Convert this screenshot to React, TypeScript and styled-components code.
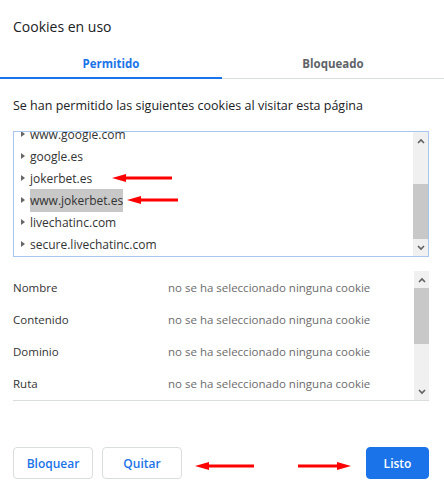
import React from 'react'
import styled, { createGlobalStyle } from 'styled-components'

const GlobalStyle = createGlobalStyle`
  body {
    margin: 0;
    background: #fff;
    font-family: "Open Sans", "Noto Sans", sans-serif;
    color: #202124;
  }
`

const BLUE = '#1a73e8'

type Cookie = { id: string, host: string, selected?: boolean }

const COOKIES: Cookie[] = [
  { id: 'c1', host: 'www.google.com' },
  { id: 'c2', host: 'google.es' },
  { id: 'c3', host: 'jokerbet.es' },
  { id: 'c4', host: 'www.jokerbet.es', selected: true },
  { id: 'c5', host: 'livechatinc.com' },
  { id: 'c6', host: 'secure.livechatinc.com' },
]

const FIELDS = ['Nombre', 'Contenido', 'Dominio', 'Ruta']

const Dialog = styled.div`
  position: relative;
  width: 444px;
  height: 495px;
  overflow: hidden;
`

const Title = styled.div`
  padding: 17px 13px 0;
  font-size: 14px;
  line-height: 20px;
  color: #202124;
`

const Tabs = styled.div`
  display: flex;
  margin-top: 12px;
  box-shadow: inset 0 -1px 0 #dadce0;
`

const Tab = styled.div<{ $active?: boolean }>`
  flex: 1;
  height: 28px;
  display: flex;
  align-items: center;
  justify-content: center;
  font-size: 11.5px;
  font-weight: 700;
  color: ${p => p.$active ? BLUE : '#5f6368'};
  border-bottom: 2px solid ${p => p.$active ? BLUE : 'transparent'};
`

const Description = styled.div`
  padding: 18px 13px 0;
  font-size: 12.5px;
  line-height: 18px;
  color: #202124;
`

const ListBox = styled.div`
  display: flex;
  margin: 16px 15px 0 13px;
  height: 124px;
  border: 1px solid #a8c7f0;
`

const ListViewport = styled.div`
  flex: 1;
  overflow: hidden;
`

const ListInner = styled.div`
  margin-top: -9px;
`

const Row = styled.div`
  display: flex;
  align-items: center;
  height: 22px;
  padding-left: 7px;
  font-size: 12px;
  color: #333;
`

const Caret = styled.span`
  width: 0;
  height: 0;
  border-top: 3.5px solid transparent;
  border-bottom: 3.5px solid transparent;
  border-left: 4px solid #666;
  margin-right: 5px;
`

const Host = styled.span<{ $selected?: boolean }>`
  padding: 3px 0;
  background: ${p => p.$selected ? '#c8c8c8' : 'transparent'};
`

const Scrollbar = styled.div`
  width: 15px;
  display: flex;
  flex-direction: column;
  background: #f0f0f0;
`

const ScrollArrow = styled.div`
  height: 17px;
  display: flex;
  align-items: center;
  justify-content: center;
`

const ScrollTrack = styled.div`
  flex: 1;
  position: relative;
`

const Details = styled.div`
  display: flex;
  margin: 14px 15px 0 13px;
  height: 129px;
  border-bottom: 1px solid #dadce0;
`

const DetailRows = styled.div`
  flex: 1;
`

const DetailRow = styled.div`
  display: grid;
  grid-template-columns: 155px 1fr;
  align-items: center;
  height: 32px;
  font-size: 11.5px;
`

const Label = styled.span`
  color: #333;
`

const Value = styled.span`
  color: #6b6b6b;
`

const Footer = styled.div`
  display: flex;
  align-items: center;
  gap: 9px;
  padding: 46px 15px 0 13px;
`

const Button = styled.button<{ $primary?: boolean }>`
  height: 32px;
  width: ${p => p.$primary ? 63 : 80}px;
  padding: 0;
  border-radius: 4px;
  font-family: inherit;
  font-size: 12px;
  font-weight: 600;
  border: 1px solid ${p => p.$primary ? BLUE : '#dadce0'};
  background: ${p => p.$primary ? BLUE : '#fff'};
  color: ${p => p.$primary ? '#fff' : BLUE};
  &:last-child {
    margin-left: auto;
  }
`

const Annotation = styled.svg<{ $x: number, $y: number }>`
  position: absolute;
  left: ${p => p.$x}px;
  top: ${p => p.$y}px;
`

const Thumb = styled.div<{ $top: number, $height: number }>`
  position: absolute;
  left: 0;
  right: 0;
  top: ${p => p.$top}px;
  height: ${p => p.$height}px;
  background: #c8c8c8;
`

function Chevron({ up }: { up?: boolean }) {
  return (
    <svg width="8" height="6" viewBox="0 0 8 6">
      <path d={up ? 'M1 5 L4 2 L7 5' : 'M1 1 L4 4 L7 1'} fill="none" stroke="#606060" strokeWidth="1.6" />
    </svg>
  )
}

// red hand-drawn pointer arrows laid over the screenshot
function Arrow({ x, y, length, right }: { x: number, y: number, length: number, right?: boolean }) {
  const h = 10
  return (
    <Annotation $x={x} $y={y - h / 2} width={length} height={h} viewBox={`0 0 ${length} ${h}`}>
      {right ? (
        <>
          <rect x="0" y={h / 2 - 1.5} width={length - 12} height="3" fill="#f00" />
          <polygon points={`${length - 14},1 ${length},${h / 2} ${length - 14},${h - 1}`} fill="#f00" />
        </>
      ) : (
        <>
          <rect x="12" y={h / 2 - 1.5} width={length - 12} height="3" fill="#f00" />
          <polygon points={`14,1 0,${h / 2} 14,${h - 1}`} fill="#f00" />
        </>
      )}
    </Annotation>
  )
}

export default function App() {
  return (
    <Dialog>
      <GlobalStyle />
      <Title>Cookies en uso</Title>
      <Tabs>
        <Tab $active>Permitido</Tab>
        <Tab>Bloqueado</Tab>
      </Tabs>
      <Description>Se han permitido las siguientes cookies al visitar esta página</Description>

      <ListBox>
        <ListViewport>
          <ListInner>
            {COOKIES.map(c => (
              <Row key={c.id}>
                <Caret />
                <Host $selected={c.selected}>{c.host}</Host>
              </Row>
            ))}
          </ListInner>
        </ListViewport>
        <Scrollbar>
          <ScrollArrow><Chevron up /></ScrollArrow>
          <ScrollTrack><Thumb $top={35} $height={55} /></ScrollTrack>
          <ScrollArrow><Chevron /></ScrollArrow>
        </Scrollbar>
      </ListBox>

      <Details>
        <DetailRows>
          {FIELDS.map(f => (
            <DetailRow key={f}>
              <Label>{f}</Label>
              <Value>no se ha seleccionado ninguna cookie</Value>
            </DetailRow>
          ))}
        </DetailRows>
        <Scrollbar>
          <ScrollArrow><Chevron up /></ScrollArrow>
          <ScrollTrack><Thumb $top={0} $height={56} /></ScrollTrack>
          <ScrollArrow><Chevron /></ScrollArrow>
        </Scrollbar>
      </Details>

      <Footer>
        <Button>Bloquear</Button>
        <Button>Quitar</Button>
        <Button $primary>Listo</Button>
      </Footer>

      <Arrow x={112} y={178} length={60} />
      <Arrow x={127} y={200} length={51} />
      <Arrow x={195} y={466} length={59} />
      <Arrow x={298} y={466} length={53} right />
    </Dialog>
  )
}
